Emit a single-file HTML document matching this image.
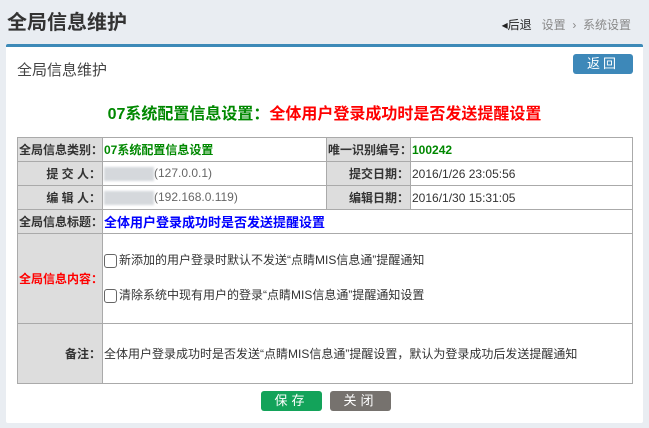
<!DOCTYPE html>
<html><head><meta charset="utf-8"><style>
*{margin:0;padding:0;box-sizing:border-box}
body{width:649px;height:428px;background:#e9edf2;font-family:"Liberation Sans","Noto Sans CJK SC",sans-serif;font-size:12px;color:#333;position:relative;overflow:hidden}
.h1{position:absolute;left:7px;top:6px;font-size:20px;font-weight:bold;color:#333}
.bc{position:absolute;right:18px;top:16px;font-size:12px;color:#888}
.bc b{color:#222;font-weight:normal}
.panel{position:absolute;left:6px;top:44px;width:637px;height:379px;background:#fff;border-top:3px solid #3d8ab8;border-radius:2px}
.pt{position:absolute;left:11px;top:12px;font-size:15px;color:#444}
.ret{position:absolute;left:567px;top:7px;width:60px;height:20px;background:#3d88b9;color:#fff;border-radius:3px;text-align:center;line-height:20px;font-size:13px;letter-spacing:3px}
.hd{position:absolute;left:0;width:637px;top:53px;text-align:center;font-size:16px;font-weight:bold}
table{position:absolute;left:11px;top:90px;width:616px;border-collapse:collapse;table-layout:fixed}
td{border:1px solid #aaa;height:24px;padding:0 1px;font-size:12px;white-space:nowrap;overflow:hidden}
td.l{background:#ddd;text-align:right;color:#333;font-weight:bold}
.g{color:#080;font-weight:bold}
.blur{display:inline-block;width:50px;height:14px;background:#d5d8dc;vertical-align:middle;filter:blur(1px)}
.cb{display:inline-block;width:13px;height:14px;border:1px solid #666;border-radius:3px;vertical-align:middle;margin-right:2px}
.btn{position:absolute;top:344px;width:61px;height:20px;color:#fff;border-radius:3px;text-align:center;line-height:20px;font-size:13px;letter-spacing:4px}
</style></head><body>
<div class="h1">全局信息维护</div>
<div class="bc"><b>◂后退</b>&nbsp;&nbsp; 设置 &nbsp;›&nbsp; 系统设置</div>
<div class="panel">
<div class="pt">全局信息维护</div>
<div class="ret">返回</div>
<div class="hd"><span style="color:#080">07系统配置信息设置：</span><span style="color:#f00">全体用户登录成功时是否发送提醒设置</span></div>
<table>
<colgroup><col style="width:85px"><col style="width:224px"><col style="width:84px"><col></colgroup>
<tr><td class="l">全局信息类别：</td><td class="g">07系统配置信息设置</td><td class="l">唯一识别编号：</td><td class="g">100242</td></tr>
<tr><td class="l">提 交 人：</td><td><span class="blur"></span><span style="color:#666">(127.0.0.1)</span></td><td class="l">提交日期：</td><td>2016/1/26 23:05:56</td></tr>
<tr><td class="l">编 辑 人：</td><td><span class="blur"></span><span style="color:#666">(192.168.0.119)</span></td><td class="l">编辑日期：</td><td>2016/1/30 15:31:05</td></tr>
<tr><td class="l">全局信息标题：</td><td colspan="3" style="color:#00f;font-weight:bold;font-size:13px">全体用户登录成功时是否发送提醒设置</td></tr>
<tr><td class="l" style="height:90px;color:#f00">全局信息内容：</td><td colspan="3" style="line-height:20px;vertical-align:top"><div style="margin-top:16px"><span class="cb"></span>新添加的用户登录时默认不发送“点睛MIS信息通”提醒通知</div><div style="margin-top:15px"><span class="cb"></span>清除系统中现有用户的登录“点睛MIS信息通”提醒通知设置</div></td></tr>
<tr><td class="l" style="height:60px">备注：</td><td colspan="3">全体用户登录成功时是否发送“点睛MIS信息通”提醒设置，默认为登录成功后发送提醒通知</td></tr>
</table>
<div class="btn" style="left:255px;background:#13a35a">保存</div>
<div class="btn" style="left:324px;background:#76726e">关闭</div>
</div>
</body></html>
